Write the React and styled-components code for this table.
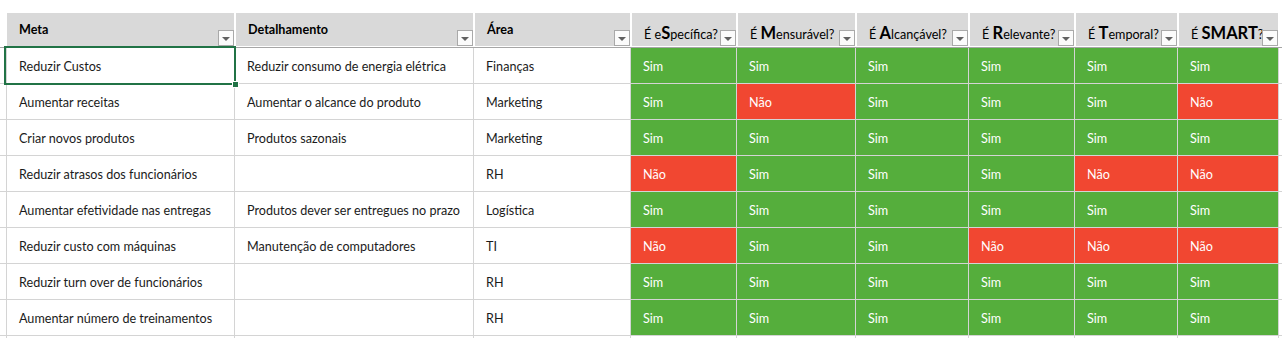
import React from "react";
import styled, { createGlobalStyle } from "styled-components";

/* ---------------- GLOBAL ---------------- */
const GlobalStyle = createGlobalStyle`
  body {
    margin: 0;
    background: #ffffff;
    font-family: Lato, "Open Sans", sans-serif;
  }
`;

const COLS = "7px 228px 239px 157px 106px 119px 113px 106px 103px 101px 1fr";
const GRID = "#d4d4d4";
const GREEN = "#55ae3c";
const RED = "#f14731";

/* ---------------- DATA ---------------- */
const criteria = [
  { pre: "É e", big: "S", post: "pecífica?" },
  { pre: "É ", big: "M", post: "ensurável?" },
  { pre: "É ", big: "A", post: "lcançável?" },
  { pre: "É ", big: "R", post: "elevante?" },
  { pre: "É ", big: "T", post: "emporal?" },
  { pre: "É ", big: "SMART", post: "?" },
];

const S = "Sim";
const N = "Não";

const rows = [
  ["Reduzir Custos", "Reduzir consumo de energia elétrica", "Finanças", [S, S, S, S, S, S]],
  ["Aumentar receitas", "Aumentar o alcance do produto", "Marketing", [S, N, S, S, S, N]],
  ["Criar novos produtos", "Produtos sazonais", "Marketing", [S, S, S, S, S, S]],
  ["Reduzir atrasos dos funcionários", "", "RH", [N, S, S, S, N, N]],
  ["Aumentar efetividade nas entregas", "Produtos dever ser entregues no prazo", "Logística", [S, S, S, S, S, S]],
  ["Reduzir custo com máquinas", "Manutenção de computadores", "TI", [N, S, S, N, N, N]],
  ["Reduzir turn over de funcionários", "", "RH", [S, S, S, S, S, S]],
  ["Aumentar número de treinamentos", "", "RH", [S, S, S, S, S, S]],
];

/* ---------------- STYLES ---------------- */
const Sheet = styled.div`
  position: relative;
  height: 338px;
  overflow: hidden;
  padding-top: 13px;
  box-sizing: border-box;
`;

const HeaderRow = styled.div`
  display: grid;
  grid-template-columns: ${COLS};
  height: 35px;
  border-bottom: 1px solid #a6a6a6;
  box-sizing: border-box;
`;

const HeadCell = styled.div`
  position: relative;
  height: 33px;
  margin: 0 1px 0 ${({ $first }) => ($first ? 0 : 1)}px;
  background: #d9d9d9;
  display: flex;
  align-items: center;
  padding: ${({ $smart }) => ($smart ? "7px 0 0 12px" : "0 0 0 12px")};
  box-sizing: border-box;
  color: #000;
  font-size: 12.6px;
  font-weight: ${({ $smart }) => ($smart ? 400 : 700)};
  white-space: pre;
`;

const Label = styled.span`
  white-space: pre;
`;

const Big = styled.b`
  font-size: 16.5px;
  font-weight: 700;
`;

const Filter = styled.span`
  position: absolute;
  right: 0;
  bottom: 0;
  width: 16px;
  height: 16px;
  box-sizing: border-box;
  border: 1px solid #a9a9a9;
  background: #fbfbfb;
  display: flex;
  align-items: center;
  justify-content: center;

  &::after {
    content: "";
    border-left: 4px solid transparent;
    border-right: 4px solid transparent;
    border-top: 4px solid #606060;
    margin-top: 1px;
  }
`;

const Row = styled.div`
  display: grid;
  grid-template-columns: ${COLS};
  height: 36px;
  border-bottom: 1px solid ${GRID};
  box-sizing: border-box;
`;

const Cell = styled.div`
  display: flex;
  align-items: center;
  padding: 2px 0 0 12px;
  border-right: 1px solid ${GRID};
  box-sizing: border-box;
  background: ${({ $fill }) => $fill || "transparent"};
  color: ${({ $fill }) => ($fill ? "#ffffff" : "#1b1b1b")};
  font-size: 12.6px;
  white-space: nowrap;
`;

const Spacer = styled.div`
  border-right: 1px solid ${GRID};
`;

const Selection = styled.div`
  position: absolute;
  left: 4px;
  top: 46px;
  width: 232px;
  height: 39px;
  border: 2px solid #217346;
  box-sizing: border-box;
  pointer-events: none;

  &::after {
    content: "";
    position: absolute;
    right: -5px;
    bottom: -5px;
    width: 5px;
    height: 5px;
    background: #217346;
    border: 1px solid #ffffff;
  }
`;

/* ---------------- COMPONENT ---------------- */
export default function App() {
  return (
    <>
      <GlobalStyle />
      <Sheet>
        <HeaderRow>
          <div />
          <HeadCell $first>
            Meta
            <Filter />
          </HeadCell>
          <HeadCell>
            Detalhamento
            <Filter />
          </HeadCell>
          <HeadCell>
            Área
            <Filter />
          </HeadCell>
          {criteria.map((c) => (
            <HeadCell key={c.big} $smart>
              <Label>
                {c.pre}
                <Big>{c.big}</Big>
                {c.post}
              </Label>
              <Filter />
            </HeadCell>
          ))}
        </HeaderRow>

        {rows.map(([meta, det, area, checks], i) => (
          <Row key={i}>
            <Spacer />
            <Cell>{meta}</Cell>
            <Cell>{det}</Cell>
            <Cell>{area}</Cell>
            {checks.map((v, j) => (
              <Cell key={j} $fill={v === S ? GREEN : RED}>
                {v}
              </Cell>
            ))}
            <div />
          </Row>
        ))}
        <Row>
          <Spacer />
          <Cell />
          <Cell />
          <Cell />
          <Cell />
          <Cell />
          <Cell />
          <Cell />
          <Cell />
          <Cell />
          <div />
        </Row>

        <Selection />
      </Sheet>
    </>
  );
}
